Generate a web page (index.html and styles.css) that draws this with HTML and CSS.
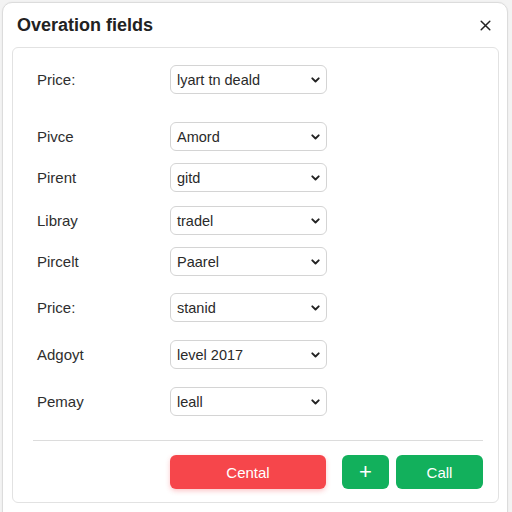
FILE: index.html
```html
<!DOCTYPE html>
<html>
<head>
<meta charset="utf-8">
<link rel="stylesheet" href="styles.css">
</head>
<body>
<div class="card">
  <div class="header">
    <h1 class="title">Overation fields</h1>
    <button class="close" aria-label="Close">
      <svg width="11" height="11" viewBox="0 0 11 11"><path d="M1.2 1.2 L9.8 9.8 M9.8 1.2 L1.2 9.8" stroke="#222" stroke-width="1.5" stroke-linecap="round"/></svg>
    </button>
  </div>
  <div class="panel">
    <div class="rows">
      <div class="row"><span class="label">Price:</span><div class="select"><span>lyart tn deald</span><svg class="chev" width="9" height="6" viewBox="0 0 9 6"><path d="M1.3 1.3 L4.5 4.5 L7.7 1.3" fill="none" stroke="#222" stroke-width="1.9" stroke-linecap="round" stroke-linejoin="round"/></svg></div></div>
      <div class="row"><span class="label">Pivce</span><div class="select"><span>Amord</span><svg class="chev" width="9" height="6" viewBox="0 0 9 6"><path d="M1.3 1.3 L4.5 4.5 L7.7 1.3" fill="none" stroke="#222" stroke-width="1.9" stroke-linecap="round" stroke-linejoin="round"/></svg></div></div>
      <div class="row"><span class="label">Pirent</span><div class="select"><span>gitd</span><svg class="chev" width="9" height="6" viewBox="0 0 9 6"><path d="M1.3 1.3 L4.5 4.5 L7.7 1.3" fill="none" stroke="#222" stroke-width="1.9" stroke-linecap="round" stroke-linejoin="round"/></svg></div></div>
      <div class="row"><span class="label">Libray</span><div class="select"><span>tradel</span><svg class="chev" width="9" height="6" viewBox="0 0 9 6"><path d="M1.3 1.3 L4.5 4.5 L7.7 1.3" fill="none" stroke="#222" stroke-width="1.9" stroke-linecap="round" stroke-linejoin="round"/></svg></div></div>
      <div class="row"><span class="label">Pircelt</span><div class="select"><span>Paarel</span><svg class="chev" width="9" height="6" viewBox="0 0 9 6"><path d="M1.3 1.3 L4.5 4.5 L7.7 1.3" fill="none" stroke="#222" stroke-width="1.9" stroke-linecap="round" stroke-linejoin="round"/></svg></div></div>
      <div class="row"><span class="label">Price:</span><div class="select"><span>stanid</span><svg class="chev" width="9" height="6" viewBox="0 0 9 6"><path d="M1.3 1.3 L4.5 4.5 L7.7 1.3" fill="none" stroke="#222" stroke-width="1.9" stroke-linecap="round" stroke-linejoin="round"/></svg></div></div>
      <div class="row"><span class="label">Adgoyt</span><div class="select"><span>level 2017</span><svg class="chev" width="9" height="6" viewBox="0 0 9 6"><path d="M1.3 1.3 L4.5 4.5 L7.7 1.3" fill="none" stroke="#222" stroke-width="1.9" stroke-linecap="round" stroke-linejoin="round"/></svg></div></div>
      <div class="row"><span class="label">Pemay</span><div class="select"><span>leall</span><svg class="chev" width="9" height="6" viewBox="0 0 9 6"><path d="M1.3 1.3 L4.5 4.5 L7.7 1.3" fill="none" stroke="#222" stroke-width="1.9" stroke-linecap="round" stroke-linejoin="round"/></svg></div></div>
    </div>
    <div class="divider"></div>
    <div class="actions">
      <button class="btn btn-cancel">Cental</button>
      <button class="btn btn-plus">+</button>
      <button class="btn btn-call">Call</button>
    </div>
  </div>
</div>
</body>
</html>
```

FILE: styles.css
```css
html, body {
  margin: 0;
  padding: 0;
  background: #f3f3f3;
  font-family: "Liberation Sans", Arial, sans-serif;
  color: #2a2a2a;
}
body {
  height: 512px;
  overflow: hidden;
  padding: 2px 4px 0 2px;
  box-sizing: border-box;
}
.card {
  background: #fff;
  border: 1px solid #dcdcdc;
  border-radius: 10px;
  height: 530px;
  box-sizing: border-box;
  box-shadow: 0 0 2px rgba(0,0,0,0.05);
}
.header {
  height: 44px;
  display: flex;
  align-items: flex-start;
  justify-content: space-between;
  padding: 12px 14px 0 14px;
  box-sizing: border-box;
}
.title {
  margin: 0;
  font-size: 18px;
  font-weight: 700;
  color: #222;
  letter-spacing: 0;
}
.close {
  background: none;
  border: none;
  padding: 0;
  margin: 5px 2px 0 0;
  width: 11px;
  height: 11px;
  display: flex;
}
.panel {
  margin-left: 9px;
  width: 487px;
  height: 456px;
  box-sizing: border-box;
  border: 1px solid #e2e2e2;
  border-radius: 6px;
  padding: 17px 15px 12px 20px;
  display: flex;
  flex-direction: column;
}
.rows {
  display: flex;
  flex-direction: column;
}
.row {
  display: flex;
  align-items: center;
  height: 29px;
}
.row:nth-child(2) { margin-top: 28px; }
.row:nth-child(3) { margin-top: 12px; }
.row:nth-child(4) { margin-top: 14px; }
.row:nth-child(5) { margin-top: 12px; }
.row:nth-child(6) { margin-top: 17px; }
.row:nth-child(7) { margin-top: 18px; }
.row:nth-child(8) { margin-top: 18px; }
.label {
  width: 137px;
  padding-left: 4px;
  box-sizing: border-box;
  font-size: 15px;
  color: #2e2e2e;
}
.select {
  width: 157px;
  height: 29px;
  box-sizing: border-box;
  border: 1px solid #d4d4d4;
  border-radius: 6px;
  display: flex;
  align-items: center;
  justify-content: space-between;
  padding: 0 6px 0 6px;
  font-size: 14.5px;
  color: #2a2a2a;
}
.chev {
  display: block;
}
.divider {
  height: 1px;
  background: #dcdcdc;
  margin: 24px 0 0 0;
}
.actions {
  display: flex;
  margin-top: 14px;
  padding-left: 137px;
}
.btn {
  height: 34px;
  border: none;
  border-radius: 6px;
  color: #fff;
  font-family: "Liberation Sans", Arial, sans-serif;
  font-size: 15px;
  padding: 0;
}
.btn-cancel {
  width: 156px;
  background: #f6464b;
  box-shadow: 0 2px 5px rgba(244,71,75,0.3);
}
.btn-plus {
  width: 47px;
  margin-left: 16px;
  background: #12b05c;
  font-size: 22px;
  font-weight: 400;
  line-height: 34px;
}
.btn-call {
  width: 87px;
  margin-left: 7px;
  background: #12b05c;
}
```
